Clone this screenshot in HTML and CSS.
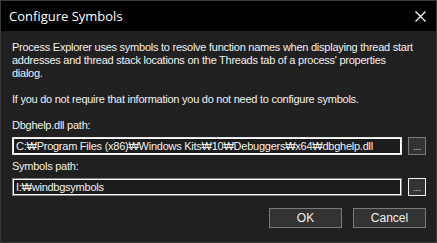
FILE: index.html
```html
<!DOCTYPE html>
<html>
    <head>
        <meta charset="UTF-8">
        <title>Configure Symbols</title>
        <link rel="stylesheet" href="styles.css">
    </head>
    <body>
        <div class="window">
            <div class="titlebar">
                <span class="caption">Configure Symbols</span>
                <svg class="close" width="11" height="11" viewBox="0 0 11 11">
                    <path d="M0.5 0.5 L10.5 10.5 M10.5 0.5 L0.5 10.5" stroke="#fff" stroke-width="1.2" fill="none" />
                </svg>
            </div>
            <div class="content">
                <p class="para">Process Explorer uses symbols to resolve function names when displaying thread start addresses and thread stack locations on the Threads tab of a process' properties<br>dialog.</p>
                <p class="para">If you do not require that information you do not need to configure symbols.</p>
                <div class="label">Dbghelp.dll path:</div>
                <div class="field-row">
                    <div class="field field-active">C:₩Program Files (x86)₩Windows Kits₩10₩Debuggers₩x64₩dbghelp.dll</div>
                    <div class="browse">...</div>
                </div>
                <div class="label">Symbols path:</div>
                <div class="field-row">
                    <div class="field">I:₩windbgsymbols</div>
                    <div class="browse browse-focus">...</div>
                </div>
                <div class="actions">
                    <div class="btn">OK</div>
                    <div class="btn">Cancel</div>
                </div>
            </div>
        </div>
    </body>
</html>
```

FILE: styles.css
```css
* { margin: 0; padding: 0; box-sizing: border-box; }
html, body { height: 100%; background: #202020; }
body { font-family: "Liberation Sans", Arial, sans-serif; font-size: 11px; letter-spacing: -0.25px; color: #f2f2f2; }
.window { width: 437px; height: 243px; border: 1px solid #3a3a3a; background: #202020; }
.titlebar { height: 30px; background: #000; display: flex; align-items: center; justify-content: space-between; padding: 0 10px 0 8px; }
.caption { font-family: "Open Sans", "Noto Sans", sans-serif; font-size: 13px; letter-spacing: 0; color: #fff; }
.close { display: block; }
.content { padding: 10px 10px 0 11px; }
.para { line-height: 13px; margin-bottom: 13px; }
.label { line-height: 13px; margin-bottom: 5px; margin-top: 1px; }
.field-row { display: flex; gap: 6px; margin-bottom: 5px; }
.field { flex: 1; height: 18px; border: 1px solid #808080; box-shadow: inset 0 0 0 1px #fff; padding: 0 3px; line-height: 16px; white-space: nowrap; overflow: hidden; background: #1c1c1c; }
.field-active { border-color: #e8e8e8; }
.browse { width: 18px; height: 18px; background: #333; border: 1px solid #7a7a7a; font-size: 9px; line-height: 18px; text-align: center; letter-spacing: 0; }
.browse-focus { border-color: #f0f0f0; }
.actions { display: flex; justify-content: flex-end; gap: 11px; margin-top: 12px; }
.btn { width: 73px; height: 20px; background: #333; border: 1px solid #7a7a7a; text-align: center; line-height: 18px; font-size: 12px; letter-spacing: 0; }
```
